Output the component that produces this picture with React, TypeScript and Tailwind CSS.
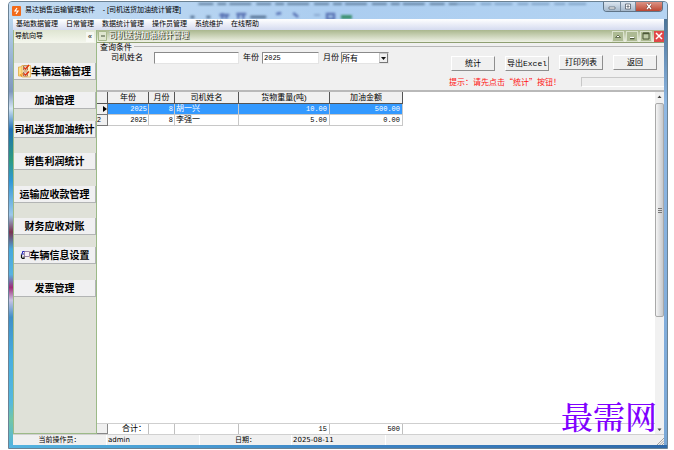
import type { ReactNode } from 'react'

const font = "font-['Liberation_Sans','Noto_Sans_CJK_SC',sans-serif]"
const mono = "font-['Liberation_Mono','Noto_Sans_CJK_SC',monospace]"

const menus = ['基础数据管理', '日常管理', '数据统计管理', '操作员管理', '系统维护', '在线帮助']

interface NavItem {
  label: string
  gap: string
  icon?: ReactNode
}

const navItems: NavItem[] = [
  { label: '车辆运输管理', gap: 'mt-5', icon: <ChecklistIcon /> },
  { label: '加油管理', gap: 'mt-3' },
  { label: '司机送货加油统计', gap: 'mt-3' },
  { label: '销售利润统计', gap: 'mt-[15px]' },
  { label: '运输应收款管理', gap: 'mt-4' },
  { label: '财务应收对账', gap: 'mt-[15px]' },
  { label: '车辆信息设置', gap: 'mt-3', icon: <VehicleIcon /> },
  { label: '发票管理', gap: 'mt-4' },
]

const rows = [
  { year: '2025', month: '8', name: '胡一兴', weight: '10.00', amount: '500.00' },
  { year: '2025', month: '8', name: '李强一', weight: '5.00', amount: '0.00' },
]

function ChecklistIcon() {
  return (
    <svg viewBox="0 0 13 14" className="h-3.5 w-[13px] shrink-0" aria-hidden>
      <path d="M.5 3h2l1-1h3v10h-6z" fill="#ffe08a" stroke="#e0a840" strokeWidth=".8" />
      <path d="M4 1.500h8.500V13H4z" fill="#ffefc4" stroke="#e0a840" strokeWidth=".7" />
      <path d="M5.500 2h4v4h-4zM5.500 8h4v4h-4z" fill="#fff" stroke="#8a4a2a" strokeWidth=".7" />
      <path d="M6 3.500l1.500 1.500 3.500-4M6 9.500L7.500 11 11 7.500" fill="none" stroke="#e0330c" strokeWidth="1.500" />
      <path d="M2 10l1.500 2.500L4.500 9" fill="none" stroke="#f09020" strokeWidth="1" />
    </svg>
  )
}

function VehicleIcon() {
  return (
    <svg viewBox="0 0 10 10" className="size-2.5 shrink-0" aria-hidden>
      <path d="M4.500 1.500h5v5h-5z" fill="#f6eef4" stroke="#9c86a8" strokeWidth="1" />
      <path d="M4.500 1.500h-2v2M1 4h3" fill="none" stroke="#2222b8" strokeWidth="1" />
      <path d="M1.500 4.500v3l1 1h1.500V6.500" fill="none" stroke="#111" strokeWidth="1.200" />
    </svg>
  )
}

function AppIcon() {
  return (
    <svg viewBox="0 0 9 10" className="h-2.5 w-[9px] shrink-0" aria-hidden>
      <rect width="9" height="10" rx="1" fill="#f26a1b" />
      <path d="M5 2L3 5h3L4 8" fill="none" stroke="#fff" strokeWidth="1.200" />
    </svg>
  )
}

/** Soft shapes of whatever lies behind the glass title bar. */
function GlassBackdrop() {
  return (
    <svg
      viewBox="0 0 660 17"
      preserveAspectRatio="none"
      className="absolute inset-0 size-full"
      aria-hidden
    >
      <defs>
        <filter id="glass" x="-5%" y="-50%" width="110%" height="200%">
          <feGaussianBlur stdDeviation="1" />
        </filter>
      </defs>
      <g filter="url(#glass)">
        <path d="M190 2h260" stroke="#5f7f9f" strokeWidth="2" strokeDasharray="15 4 9 3 22 5" />
        <path d="M450 2h130" stroke="#6f93b8" strokeWidth="1.500" strokeDasharray="18 5 11 3" />
        <path d="M182 15h4M198 15h4M242 15h16" stroke="#4d6a8c" strokeWidth="2.500" />
        <path
          d="M211 13h10M214 11v6M218 12v5M228 12h10M230 11v6M235 11v6M268 12l5-1M285 11l5 4M319 12h7v5h-7z"
          fill="none"
          stroke="#5a73b4"
          strokeWidth="2.500"
        />
        <path d="M306 13h6" stroke="#8aa9d0" strokeWidth="2" />
        <path d="M333 15h11" stroke="#3c9271" strokeWidth="4" />
      </g>
    </svg>
  )
}

function TitleBar() {
  return (
    <header className="relative flex h-[17px] shrink-0 items-center bg-linear-to-r from-[#c4dcf2] via-[#abcdf0] to-[#b5d4f2] text-[7px] text-black">
      <GlassBackdrop />
      <div className="relative flex h-full flex-1 items-center gap-1 pl-[3px]">
        <AppIcon />
        <h1 className="whitespace-pre">易达销售运输管理软件    - [司机送货加油统计管理]</h1>
      </div>
      <div className="relative mr-1 flex h-2.5 self-start overflow-hidden rounded-b-sm border border-t-0 border-[#5f7487]">
        <button aria-label="最小化" className="grid w-4 place-items-center bg-linear-to-b from-[#dce6f0] to-[#a5b8cb]">
          <svg viewBox="0 0 8 7" className="h-[7px] w-2"><path d="M1 4h6v2H1z" fill="#fff" stroke="#505b67" strokeWidth=".7" /></svg>
        </button>
        <button aria-label="最大化" className="grid w-4 place-items-center border-x border-[#75899c] bg-linear-to-b from-[#dce6f0] to-[#a5b8cb]">
          <svg viewBox="0 0 8 7" className="h-[7px] w-2"><path d="M1.500 1h5v5h-5zM3 3h2v1H3z" fill="#fff" stroke="#505b67" strokeWidth=".8" /></svg>
        </button>
        <button aria-label="关闭" className="grid w-[26px] place-items-center bg-linear-to-b from-[#dc9284] to-[#bb4632]">
          <svg viewBox="0 0 8 7" className="h-[7px] w-2">
            <path d="M2 1l4 5M6 1L2 6" stroke="#70352f" strokeWidth="2.400" />
            <path d="M2 1l4 5M6 1L2 6" stroke="#fff" strokeWidth="1.400" />
          </svg>
        </button>
      </div>
    </header>
  )
}

function Sidebar() {
  return (
    <aside className="flex w-[84px] shrink-0 flex-col border-x border-b border-[#9cba88] bg-[#dfe1d8]">
      <div className="flex h-[13px] shrink-0 items-center justify-between bg-linear-to-b from-[#dfe5d2] to-[#f5f7ee] pr-0.5 pl-px text-[7px]">
        <h2>导航向导</h2>
        <button aria-label="收起导航" className="h-2.5 bg-white/60 px-0.5 leading-[9px]">«</button>
      </div>
      <nav className="flex flex-col">
        {navItems.map((item) => (
          <button
            key={item.label}
            className={`${item.gap} flex h-[17px] items-center justify-center border-r border-b border-[#b2b4b4] bg-[#f0f0f1] text-[10px] font-bold whitespace-nowrap`}
          >
            {item.icon}
            {item.label}
          </button>
        ))}
      </nav>
    </aside>
  )
}

function ChildTitleBar() {
  const button = 'grid h-[11px] w-3 place-items-center border border-[#dbe2cd] bg-[#adba93]'
  return (
    <div className="flex h-[13px] shrink-0 items-center border-b border-[#8f9f72] bg-linear-to-b from-[#aab78e] to-[#eff2e6] pl-px">
      <svg viewBox="0 0 9 10" className="h-2.5 w-[9px]" aria-hidden>
        <path d="M.5.500h8v9h-8z" fill="#dfe6cf" stroke="#a8b98c" />
        <path d="M3 5h4" stroke="#44503a" strokeWidth="1.200" />
      </svg>
      <h2 className="flex-1 pl-0.5 text-[8px] text-white [text-shadow:1px_1px_#3f4532,1px_0_#6b7258]">
        司机送货加油统计管理
      </h2>
      <div className="flex gap-0.5">
        <button aria-label="折叠" className={button}>
          <svg viewBox="0 0 8 8" className="size-2"><path d="M1.500 5.500L4 3l2.500 2.500z" fill="#fff" stroke="#4c5939" strokeWidth=".8" /></svg>
        </button>
        <button aria-label="最小化子窗口" className={button}>
          <svg viewBox="0 0 8 8" className="size-2">
            <path d="M2 6.500h4.500" stroke="#4c5939" strokeWidth="1.500" />
            <path d="M2 5.500h4" stroke="#fff" strokeWidth="1" />
          </svg>
        </button>
        <button aria-label="还原子窗口" className={button}>
          <svg viewBox="0 0 8 8" className="size-2">
            <path d="M1 1h6v6H1z" fill="#c0cca9" stroke="#4c5939" strokeWidth="1" />
            <path d="M1 1.500h6" stroke="#4c5939" strokeWidth="1.500" />
          </svg>
        </button>
        <button aria-label="关闭子窗口" className="grid h-[11px] w-2.5 place-items-center bg-[#e14848]">
          <svg viewBox="0 0 8 8" className="size-2"><path d="M1 1l6 6M7 1L1 7" stroke="#fff" strokeWidth="1.500" /></svg>
        </button>
      </div>
    </div>
  )
}

function ActionButton({ children, className = '' }: { children: ReactNode; className?: string }) {
  return (
    <button
      className={`h-[15px] border border-t-white border-r-[#8e8e8e] border-b-[#8e8e8e] border-l-white bg-[#f0f0f0] text-[8px] leading-3 whitespace-nowrap ${className}`}
    >
      {children}
    </button>
  )
}

function FilterPanel() {
  const field = 'border border-t-[#8a8a8a] border-r-[#e4e4e4] border-b-[#e4e4e4] border-l-[#8a8a8a] bg-white'
  return (
    <section className="flex h-[49px] shrink-0 justify-between border-b-2 border-[#b9b9b9] bg-[#f0f0f0] text-[8px]">
      <fieldset className="min-w-0 flex-1 pl-[3px]">
        <div className="flex h-[9px] items-start gap-0.5">
          <legend className="leading-[9px]">查询条件</legend>
          <span className="mt-[3px] h-px flex-1 bg-[#b8b8b8]" />
        </div>
        <div className="flex h-3 items-center pl-[11px]">
          <label htmlFor="driver">司机姓名</label>
          <input id="driver" className={`ml-[11px] h-3 w-[85px] ${field}`} />
          <label htmlFor="year" className="ml-1">年份</label>
          <input
            id="year"
            defaultValue="2025"
            className={`ml-[3px] h-3 w-[57px] pl-px text-[7px] ${mono} ${field}`}
          />
          <label htmlFor="month" className="ml-1">月份</label>
          <div className="relative ml-0.5 h-3 w-12">
            <select id="month" className={`block h-3 w-full appearance-none ${field}`}>
              <option>所有</option>
            </select>
            <span className="pointer-events-none absolute top-px right-px grid h-2.5 w-[9px] place-items-center border border-[#c9c9c9] border-r-[#777] border-b-[#777] bg-[#f0f0f0]">
              <svg viewBox="0 0 5 3" className="h-[3px] w-[5px]"><path d="M0 0h5L2.500 3z" fill="#111" /></svg>
            </span>
          </div>
        </div>
      </fieldset>
      <div className="w-[216px] shrink-0 pt-[3px]">
        <div className="h-px bg-[#b8b8b8]" />
        <div className="mt-2 flex h-4 gap-2.5 pl-[3px]">
          <ActionButton className="mt-px w-11">统计</ActionButton>
          <ActionButton className={`mt-px w-11 ${mono}`}>导出Excel</ActionButton>
          <ActionButton className="w-11">打印列表</ActionButton>
          <ActionButton className="w-11">返回</ActionButton>
        </div>
        <div className="mt-1.5 flex h-2.5 items-center gap-5 pl-px">
          <p className="font-['Noto_Sans_CJK_SC',sans-serif] leading-[10px] whitespace-nowrap text-[#ff1212]">
            提示：请先点击“统计”按钮！
          </p>
          <div className="h-2.5 flex-1 border border-r-0 border-t-[#c8c8c8] border-b-white border-l-[#c8c8c8] bg-[#eee]" />
        </div>
      </div>
    </section>
  )
}

function Columns() {
  return (
    <colgroup>
      <col className="w-[11px]" />
      <col className="w-[41px]" />
      <col className="w-[26px]" />
      <col className="w-16" />
      <col className="w-[91px]" />
      <col className="w-[73px]" />
    </colgroup>
  )
}

function ResultGrid() {
  const head = 'border-r border-b border-[#555] bg-[#f0f0f0] font-normal'
  const foot = 'border-r border-[#c0c0c0] pr-0.5 text-right'
  return (
    <section className="flex min-h-0 flex-1 bg-white">
      <div className="flex min-w-0 flex-1 flex-col text-[8px] leading-[10px]">
        <table className="w-[306px] table-fixed border-separate border-spacing-0">
          <Columns />
          <thead>
            <tr className="h-3">
              <th className={head} aria-label="行" />
              {['年份', '月份', '司机姓名', '货物重量(吨)', '加油金额'].map((name) => (
                <th key={name} scope="col" className={head}>{name}</th>
              ))}
            </tr>
          </thead>
          <tbody>
            {rows.map((row, i) => {
              const cell = `border-r border-b border-[#c8c8c8] text-right ${mono} ${i === 0 ? 'bg-[#3399ff] text-white' : 'text-black'}`
              return (
                <tr key={row.name} className="h-[11px]">
                  <th scope="row" className="border-r border-b border-[#777] bg-[#f0f0f0] text-left text-[7px] font-normal">
                    {i === 0 ? (
                      <svg viewBox="0 0 4 6" className="ml-1.5 h-1.5 w-1" aria-label="当前行"><path d="M0 0l4 3-4 3z" fill="#000" /></svg>
                    ) : (
                      i + 1
                    )}
                  </th>
                  <td className={`${cell} pr-px text-[7px]`}>{row.year}</td>
                  <td className={`${cell} pr-px text-[7px]`}>{row.month}</td>
                  <td className={`${cell} pl-px !text-left`}>{row.name}</td>
                  <td className={`${cell} pr-0.5 text-[7px]`}>{row.weight}</td>
                  <td className={`${cell} pr-0.5 text-[7px]`}>{row.amount}</td>
                </tr>
              )
            })}
          </tbody>
        </table>
        <div className="mt-auto border-t border-[#cfcfcf]">
          <table className="w-[306px] table-fixed border-separate border-spacing-0">
            <Columns />
            <tbody>
              <tr className="h-2.5">
                <td className="border-r border-b border-[#888] bg-[#f0f0f0]" />
                <th scope="row" className={`${foot} font-normal`}>合计：</th>
                <td className={foot} />
                <td className={foot} />
                <td className={`${foot} ${mono} text-[7px]`}>15</td>
                <td className={`${foot} ${mono} text-[7px]`}>500</td>
              </tr>
            </tbody>
          </table>
        </div>
      </div>
      <div className="flex w-[9px] shrink-0 flex-col bg-[#f1f1f1]" aria-hidden>
        <svg viewBox="0 0 9 11" className="h-[11px] w-full"><path d="M2.500 6h4L4.500 3.500z" fill="#444" /></svg>
        <div className="grid h-[214px] place-items-center rounded-xs border border-[#a9a9a9] bg-linear-to-r from-[#f5f5f5] to-[#c6c8cb]">
          <svg viewBox="0 0 4 5" className="h-[5px] w-1"><path d="M0 .5h4M0 2.500h4M0 4.500h4" stroke="#777" /></svg>
        </div>
        <svg viewBox="0 0 9 11" className="mt-auto h-[11px] w-full"><path d="M2.500 5.500h4L4.500 8z" fill="#444" /></svg>
      </div>
    </section>
  )
}

function StatusBar() {
  const cell = 'flex items-center border-r border-white'
  return (
    <footer className="flex h-[11px] shrink-0 border-t border-[#d0d0d0] bg-[#f0f0f0] font-['DejaVu_Sans','Noto_Sans_CJK_SC',sans-serif] text-[7px] leading-none">
      <div className={`${cell} w-[94px] justify-center`}>当前操作员：</div>
      <div className={`${cell} w-[93px] pl-px`}>admin</div>
      <div className={`${cell} w-[92px] justify-center`}>日期：</div>
      <div className={`${cell} w-[94px] pl-px`}>2025-08-11</div>
      <div className="flex flex-1 items-end justify-end">
        <svg viewBox="0 0 8 8" className="size-2" aria-hidden>
          <path d="M1 8l7-7M3.500 8L8 3.500M6 8l2-2" stroke="#a0a0a0" />
        </svg>
      </div>
    </footer>
  )
}

export default function App() {
  return (
    <div className={`flex h-screen bg-white py-px pr-1.5 pl-2 text-black ${font}`}>
      <div className="relative flex min-w-0 flex-1 flex-col overflow-hidden rounded-t-sm border border-[#6b8294] bg-[#abcdf0]">
        <TitleBar />
        <div className="flex min-h-0 flex-1">
          <div className="w-1 shrink-0 bg-[linear-gradient(#b9d5ee,#7e97bd_17%,#d5e6f4_21%,#1f6fb5_26%,#2c9a80_33%,#2f97d6_38%,#9cc8ea_46%,#7b3350_50%,#46a9dd_54%,#58b2e0_60%,#a02a78_63%,#c9c3e4_66%,#3f8fc8_70%,#48aee0_80%,#56b8de_90%,#72c6a8_94%,#52b4dd)]" />
          <div className="flex min-w-0 flex-1 flex-col">
            <nav className="flex h-[11px] shrink-0 items-center gap-2 bg-linear-to-b from-white to-[#d5dbef] pl-[3px] text-[7px] whitespace-nowrap">
              {menus.map((name) => (
                <button key={name}>{name}</button>
              ))}
            </nav>
            <div className="flex min-h-0 flex-1">
              <Sidebar />
              <main className="flex min-w-0 flex-1 flex-col">
                <ChildTitleBar />
                <FilterPanel />
                <ResultGrid />
              </main>
            </div>
            <StatusBar />
          </div>
          <div className="w-[3px] shrink-0 bg-linear-to-b from-[#4b7398] via-[#8fb8e4] via-20% to-[#7aa7d6]" />
        </div>
        <div className="h-[3px] shrink-0 bg-linear-to-r from-[#54b4e0] via-[#3f86c6] to-[#2f69a8]" />
        <p className="absolute right-2.5 bottom-2.5 font-['Noto_Serif_CJK_SC','Noto_Sans_CJK_SC',serif] text-[32px] leading-[46px] font-medium text-[#8000ff]">
          最需网
        </p>
      </div>
    </div>
  )
}
